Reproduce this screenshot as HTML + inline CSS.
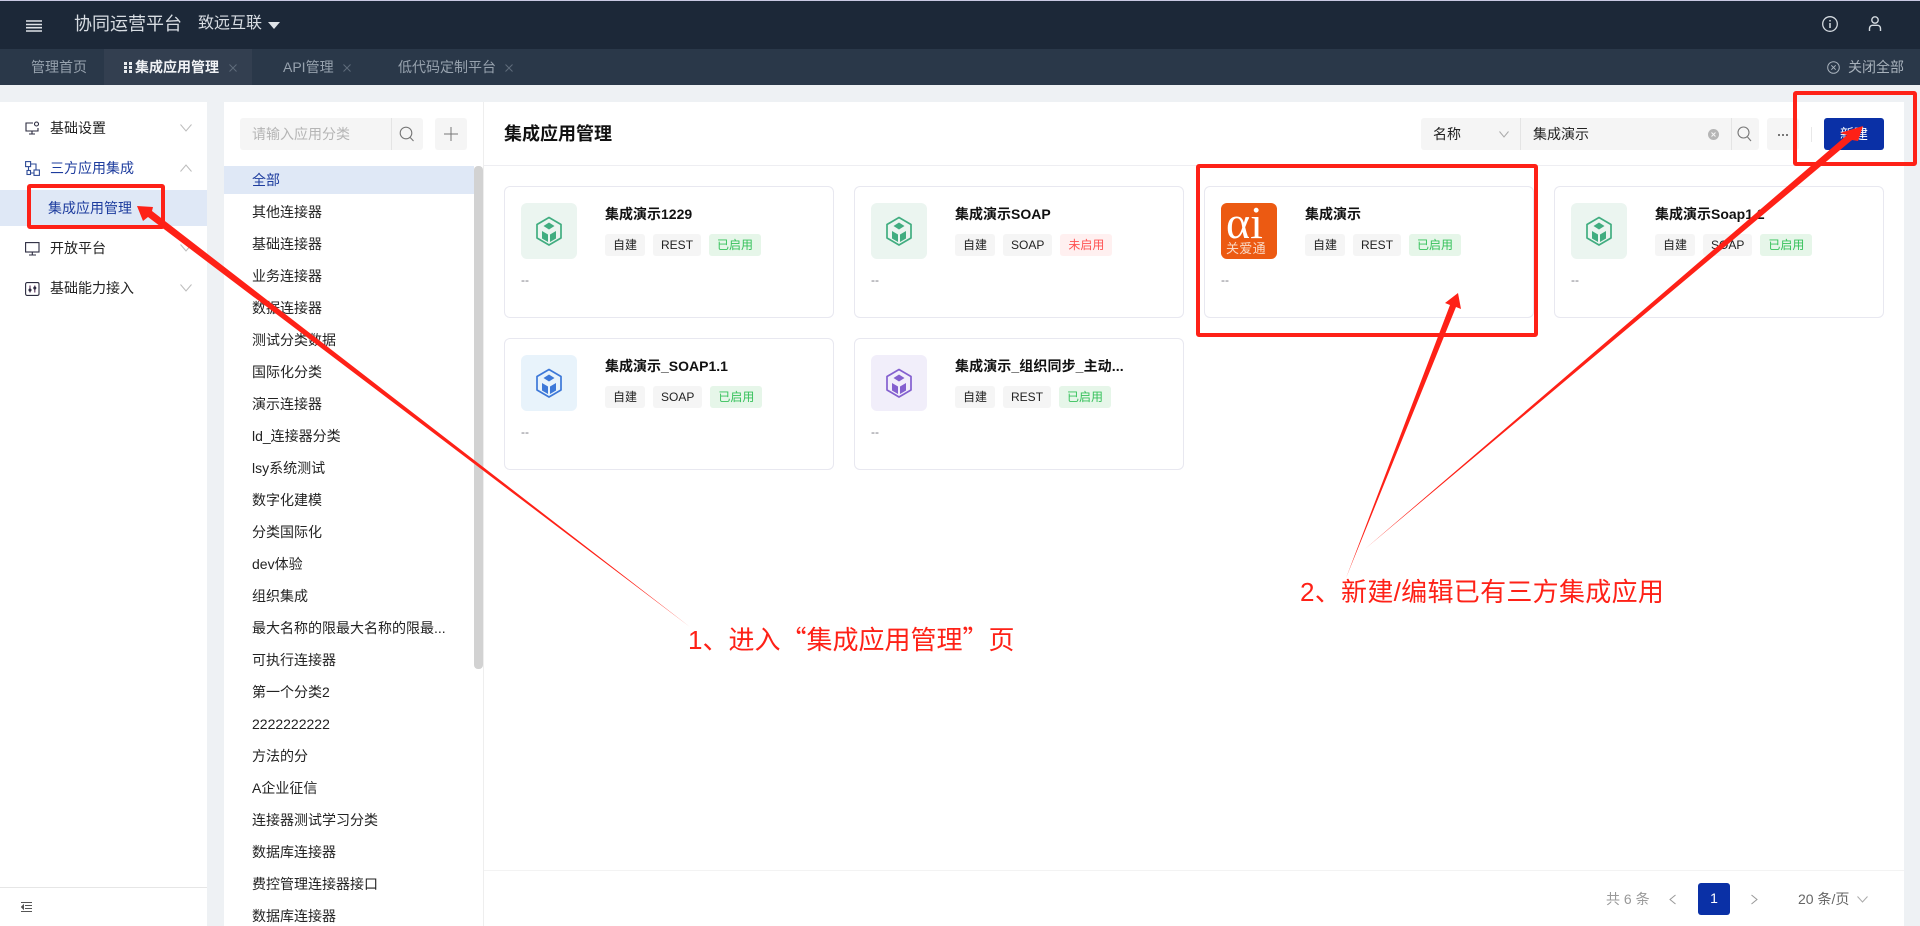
<!DOCTYPE html>
<html lang="zh-CN">
<head>
<meta charset="utf-8">
<title>集成应用管理</title>
<style>
*{box-sizing:border-box}
html,body{margin:0;padding:0;width:1920px;height:926px;overflow:hidden;background:#eef1f4;font-family:"Liberation Sans","Noto Sans CJK SC",sans-serif;color:#222;font-size:14px}
.a{position:absolute}
.t{position:absolute;white-space:nowrap;line-height:20px;height:20px}
.topbar{left:0;top:0;width:1920px;height:49px;background:#1c2838;border-top:1px solid #c9c9e2}
.tabbar{left:0;top:49px;width:1920px;height:36px;background:#2a3849}
.tab{color:#97a2ae}
.white{background:#fff}
.row{left:252px;color:#222}
.card{position:absolute;width:330px;height:132px;background:#fff;border:1px solid #e8e8f0;border-radius:6px}
.ic{position:absolute;left:16px;top:16px;width:56px;height:56px;border-radius:6px}
.ti{position:absolute;left:100px;top:17px;line-height:20px;font-weight:700;white-space:nowrap;color:#111}
.tags{position:absolute;left:100px;top:47px;display:flex;gap:8px}
.tag{height:22px;line-height:22px;padding:0 8px;font-size:12px;border-radius:3px;background:#f5f5f5;color:#222;white-space:nowrap}
.g{background:#e6f6e9;color:#36c15b}
.r{background:#fff0f0;color:#ff5252}
.dash{position:absolute;left:16px;top:84px;line-height:18px;font-size:12px;color:#7d7d86}
.red{position:absolute;border:4px solid #fe2117;border-radius:3px}
.lbl{color:#fe2117;font-size:26px;line-height:36px;height:36px;position:absolute;white-space:nowrap}
</style>
</head>
<body>
<div class="a topbar"></div>
<div class="a tabbar"></div>
<div class="a" style="left:104px;top:49px;width:148px;height:36px;background:#333f50"></div>

<!-- top bar -->
<svg class="a" style="left:26px;top:20px" width="16" height="12" viewBox="0 0 16 12"><path d="M0 1h16M0 4.500h16M0 7.700h16M0 11h16" stroke="#dfe3e8" stroke-width="1.600"/></svg>
<div class="t" style="left:74px;top:14px;font-size:18px;color:#d8dde3">协同运营平台</div>
<div class="t" style="left:198px;top:14px;font-size:16px;color:#d8dde3">致远互联</div>
<svg class="a" style="left:268px;top:22px" width="12" height="7" viewBox="0 0 12 7"><path d="M0 0h12L6 7z" fill="#dfe3e8"/></svg>
<svg class="a" style="left:1821px;top:15px" width="18" height="18" viewBox="0 0 18 18" fill="none" stroke="#d4dae0" stroke-width="1.300"><circle cx="9" cy="9" r="7.300"/><path d="M9 8v5M9 5v1.500" stroke-width="1.500"/></svg>
<svg class="a" style="left:1866px;top:15px" width="18" height="18" viewBox="0 0 18 18" fill="none" stroke="#d4dae0" stroke-width="1.400"><circle cx="9" cy="5" r="3.200"/><path d="M3.500 16v-2.500c0-2 1.500-3.200 3-3.200h5c1.500 0 3 1.200 3 3.200V16"/></svg>

<!-- tabs -->
<div class="t tab" style="left:31px;top:57px">管理首页</div>
<svg class="a" style="left:124px;top:62px" width="8" height="11" viewBox="0 0 8 11" fill="#e8ebef"><rect x="0" y="0" width="3" height="3"/><rect x="5" y="0" width="3" height="3"/><rect x="0" y="4" width="3" height="3"/><rect x="5" y="4" width="3" height="3"/><rect x="0" y="8" width="3" height="3"/><rect x="5" y="8" width="3" height="3"/></svg>
<div class="t" style="left:135px;top:57px;color:#f0f2f5;font-weight:700">集成应用管理</div>
<svg class="a" style="left:229px;top:64px" width="8" height="8" viewBox="0 0 8 8"><path d="M.5.5l7 7M7.500.5l-7 7" stroke="#5f6c7b"/></svg>
<div class="t tab" style="left:283px;top:57px">API管理</div>
<svg class="a" style="left:343px;top:64px" width="8" height="8" viewBox="0 0 8 8"><path d="M.5.5l7 7M7.500.5l-7 7" stroke="#5f6c7b"/></svg>
<div class="t tab" style="left:398px;top:57px">低代码定制平台</div>
<svg class="a" style="left:505px;top:64px" width="8" height="8" viewBox="0 0 8 8"><path d="M.5.5l7 7M7.500.5l-7 7" stroke="#5f6c7b"/></svg>
<svg class="a" style="left:1827px;top:61px" width="13" height="13" viewBox="0 0 13 13" fill="none" stroke="#a8b2bc"><circle cx="6.500" cy="6.500" r="5.800"/><path d="M4.300 4.300l4.400 4.400M8.700 4.300l-4.400 4.400"/></svg>
<div class="t" style="left:1848px;top:57px;color:#a8b2bc">关闭全部</div>

<!-- sidebar -->
<div class="a white" style="left:0;top:102px;width:207px;height:824px"></div>
<div class="a" style="left:0;top:190px;width:207px;height:36px;background:#dfe8f6"></div>
<svg class="a" style="left:25px;top:121px" width="15" height="14" viewBox="0 0 15 14" fill="none" stroke="#2b2b3f" stroke-width="1.100"><path d="M8 2H1v8h12V7M7 10v3M4 13h6"/><circle cx="11.500" cy="3" r="2"/></svg>
<div class="t" style="left:50px;top:118px">基础设置</div>
<svg class="a" style="left:25px;top:161px" width="15" height="15" viewBox="0 0 15 15" fill="none" stroke="#2f4c97" stroke-width="1.100"><rect x=".6" y=".6" width="5" height="5"/><rect x="9" y="9" width="5.400" height="5.400"/><rect x="2" y="9.500" width="3.500" height="4"/><path d="M5.600 3H11v6M3.500 5.600v4M5.500 12H9"/></svg>
<div class="t" style="left:50px;top:158px;color:#1d3c9e">三方应用集成</div>
<div class="t" style="left:48px;top:198px;color:#1d3c9e">集成应用管理</div>
<svg class="a" style="left:25px;top:242px" width="15" height="14" viewBox="0 0 15 14" fill="none" stroke="#2b2b3f" stroke-width="1.100"><rect x=".6" y=".6" width="13.400" height="9.400"/><path d="M7.300 10v3M4 13h7"/></svg>
<div class="t" style="left:50px;top:238px">开放平台</div>
<svg class="a" style="left:25px;top:282px" width="15" height="14" viewBox="0 0 15 14" fill="none" stroke="#2b2b3f" stroke-width="1.100"><rect x=".6" y=".6" width="13.400" height="12.800" rx="1.500"/><path d="M5 3.500v7M9.800 3.500v7" stroke="#552a55"/><circle cx="5" cy="8" r="1" fill="#2b2b3f"/><circle cx="9.800" cy="6" r="1" fill="#2b2b3f"/></svg>
<div class="t" style="left:50px;top:278px">基础能力接入</div>
<svg class="a" style="left:180px;top:124px" width="12" height="8" viewBox="0 0 12 8" fill="none" stroke="#bcbcbc"><path d="M.5.5L6 7 11.500.5"/></svg>
<svg class="a" style="left:180px;top:164px" width="12" height="8" viewBox="0 0 12 8" fill="none" stroke="#bcbcbc"><path d="M.5 7.500L6 1l5.500 6.500"/></svg>
<svg class="a" style="left:180px;top:244px" width="12" height="8" viewBox="0 0 12 8" fill="none" stroke="#bcbcbc"><path d="M.5.5L6 7 11.500.5"/></svg>
<svg class="a" style="left:180px;top:284px" width="12" height="8" viewBox="0 0 12 8" fill="none" stroke="#bcbcbc"><path d="M.5.5L6 7 11.500.5"/></svg>
<div class="a" style="left:0;top:887px;width:207px;height:1px;background:#e6e6e6"></div>
<svg class="a" style="left:21px;top:902px" width="12" height="10" viewBox="0 0 12 10" fill="none" stroke="#555"><path d="M0 .5h11M4 3.500h7M4 6.500h7M0 9.500h11"/><path d="M2.500 3L.5 5l2 2z" fill="#555"/></svg>

<!-- category panel -->
<div class="a white" style="left:224px;top:102px;width:260px;height:824px;border-right:1px solid #eeeeee"></div>
<div class="a" style="left:240px;top:118px;width:183px;height:32px;background:#f5f5f5;border-radius:3px"></div>
<div class="a" style="left:391px;top:118px;width:1px;height:32px;background:#e4e4e4"></div>
<div class="t" style="left:252px;top:124px;color:#b5b5b5">请输入应用分类</div>
<svg class="a" style="left:399px;top:126px" width="16" height="16" viewBox="0 0 16 16" fill="none" stroke="#777" stroke-width="1.100"><circle cx="7" cy="7" r="5.800"/><path d="M11 11.300l3.500 3.700"/></svg>
<div class="a" style="left:435px;top:118px;width:32px;height:32px;background:#f5f5f5;border-radius:3px"></div>
<svg class="a" style="left:444px;top:127px" width="14" height="14" viewBox="0 0 14 14" stroke="#777"><path d="M7 0v14M0 7h14"/></svg>
<div class="a" style="left:224px;top:166px;width:250px;height:28px;background:#dfe8f6"></div>
<div class="a" style="left:474px;top:166px;width:9px;height:503px;background:#d2d2d2;border-radius:4px"></div>
<div class="t row" style="top:170px;color:#1d3c9e">全部</div>
<div class="t row" style="top:202px">其他连接器</div>
<div class="t row" style="top:234px">基础连接器</div>
<div class="t row" style="top:266px">业务连接器</div>
<div class="t row" style="top:298px">数据连接器</div>
<div class="t row" style="top:330px">测试分类数据</div>
<div class="t row" style="top:362px">国际化分类</div>
<div class="t row" style="top:394px">演示连接器</div>
<div class="t row" style="top:426px">ld_连接器分类</div>
<div class="t row" style="top:458px">lsy系统测试</div>
<div class="t row" style="top:490px">数字化建模</div>
<div class="t row" style="top:522px">分类国际化</div>
<div class="t row" style="top:554px">dev体验</div>
<div class="t row" style="top:586px">组织集成</div>
<div class="t row" style="top:618px">最大名称的限最大名称的限最...</div>
<div class="t row" style="top:650px">可执行连接器</div>
<div class="t row" style="top:682px">第一个分类2</div>
<div class="t row" style="top:714px">2222222222</div>
<div class="t row" style="top:746px">方法的分</div>
<div class="t row" style="top:778px">A企业征信</div>
<div class="t row" style="top:810px">连接器测试学习分类</div>
<div class="t row" style="top:842px">数据库连接器</div>
<div class="t row" style="top:874px">费控管理连接器接口</div>
<div class="t row" style="top:906px">数据库连接器</div>

<!-- main -->
<div class="a white" style="left:484px;top:102px;width:1420px;height:824px"></div>
<div class="a" style="left:484px;top:165px;width:1420px;height:1px;background:#eeeef2"></div>
<div class="a" style="left:484px;top:870px;width:1420px;height:1px;background:#f3f3f3"></div>
<div class="t" style="left:504px;top:122px;font-size:18px;line-height:24px;height:24px;font-weight:700;color:#111">集成应用管理</div>

<div class="a" style="left:1421px;top:118px;width:338px;height:32px;background:#f5f5f5;border-radius:3px"></div>
<div class="a" style="left:1520px;top:118px;width:1px;height:32px;background:#e4e4e4"></div>
<div class="a" style="left:1731px;top:118px;width:1px;height:32px;background:#e4e4e4"></div>
<div class="t" style="left:1433px;top:124px">名称</div>
<svg class="a" style="left:1499px;top:131px" width="10" height="7" viewBox="0 0 10 7" fill="none" stroke="#aaa"><path d="M.5.5L5 6 9.500.5"/></svg>
<div class="t" style="left:1533px;top:124px">集成演示</div>
<svg class="a" style="left:1708px;top:129px" width="11" height="11" viewBox="0 0 11 11"><circle cx="5.500" cy="5.500" r="5.500" fill="#b5b5b5"/><path d="M3.500 3.500l4 4M7.500 3.500l-4 4" stroke="#f5f5f5"/></svg>
<svg class="a" style="left:1737px;top:126px" width="15" height="16" viewBox="0 0 15 16" fill="none" stroke="#777" stroke-width="1.100"><circle cx="6.500" cy="6.500" r="5.500"/><path d="M10.500 11l3.500 4"/></svg>
<div class="a" style="left:1767px;top:118px;width:32px;height:32px;background:#f5f5f5;border-radius:3px"></div>
<div class="a" style="left:1778px;top:134px;width:10px;height:2px;background-image:repeating-linear-gradient(90deg,#777 0 2px,transparent 2px 4px)"></div>
<div class="a" style="left:1811px;top:127px;width:1px;height:15px;background:#e8e8e8"></div>
<div class="a" style="left:1824px;top:118px;width:60px;height:32px;background:#0a30a6;border-radius:3px"></div>
<div class="t" style="left:1840px;top:124px;color:#fff">新建</div>

<!-- cards -->
<div class="card" style="left:504px;top:186px">
  <div class="ic" style="background:#ebf5f0"><svg width="56" height="56" viewBox="0 0 56 56"><path d="M28 14.500l12 7v13.500l-12 7-12-7V21.500z" fill="none" stroke="#41ad80" stroke-width="1.700" stroke-linejoin="round"/><path d="M28 19.500l5.500 3.500-5.500 3.500-5.500-3.500zM21 28l6 3.500V39l-6-3.500zM35 28l-6 3.500V39l6-3.500z" fill="#41ad80"/></svg></div>
  <div class="ti">集成演示1229</div>
  <div class="tags"><span class="tag">自建</span><span class="tag">REST</span><span class="tag g">已启用</span></div>
  <div class="dash">--</div>
</div>
<div class="card" style="left:854px;top:186px">
  <div class="ic" style="background:#ebf5f0"><svg width="56" height="56" viewBox="0 0 56 56"><path d="M28 14.500l12 7v13.500l-12 7-12-7V21.500z" fill="none" stroke="#41ad80" stroke-width="1.700" stroke-linejoin="round"/><path d="M28 19.500l5.500 3.500-5.500 3.500-5.500-3.500zM21 28l6 3.500V39l-6-3.500zM35 28l-6 3.500V39l6-3.500z" fill="#41ad80"/></svg></div>
  <div class="ti">集成演示SOAP</div>
  <div class="tags"><span class="tag">自建</span><span class="tag">SOAP</span><span class="tag r">未启用</span></div>
  <div class="dash">--</div>
</div>
<div class="card" style="left:1204px;top:186px">
  <div class="ic" style="background:#ec5a12;overflow:hidden">
    <div class="a" style="left:5px;top:-6px;font-family:'Liberation Serif',serif;font-size:46px;line-height:52px;color:#fff">αi</div>
    <div class="a" style="left:5px;top:37px;font-size:13px;line-height:18px;color:#f9d8c4;white-space:nowrap;letter-spacing:.3px">关爱通</div>
  </div>
  <div class="ti">集成演示</div>
  <div class="tags"><span class="tag">自建</span><span class="tag">REST</span><span class="tag g">已启用</span></div>
  <div class="dash">--</div>
</div>
<div class="card" style="left:1554px;top:186px">
  <div class="ic" style="background:#ebf5f0"><svg width="56" height="56" viewBox="0 0 56 56"><path d="M28 14.500l12 7v13.500l-12 7-12-7V21.500z" fill="none" stroke="#41ad80" stroke-width="1.700" stroke-linejoin="round"/><path d="M28 19.500l5.500 3.500-5.500 3.500-5.500-3.500zM21 28l6 3.500V39l-6-3.500zM35 28l-6 3.500V39l6-3.500z" fill="#41ad80"/></svg></div>
  <div class="ti">集成演示Soap1.2</div>
  <div class="tags"><span class="tag">自建</span><span class="tag">SOAP</span><span class="tag g">已启用</span></div>
  <div class="dash">--</div>
</div>
<div class="card" style="left:504px;top:338px">
  <div class="ic" style="background:#e8f3fb"><svg width="56" height="56" viewBox="0 0 56 56"><path d="M28 14.500l12 7v13.500l-12 7-12-7V21.500z" fill="none" stroke="#3d78d8" stroke-width="1.700" stroke-linejoin="round"/><path d="M28 19.500l5.500 3.500-5.500 3.500-5.500-3.500zM21 28l6 3.500V39l-6-3.500zM35 28l-6 3.500V39l6-3.500z" fill="#3d78d8"/></svg></div>
  <div class="ti">集成演示_SOAP1.1</div>
  <div class="tags"><span class="tag">自建</span><span class="tag">SOAP</span><span class="tag g">已启用</span></div>
  <div class="dash">--</div>
</div>
<div class="card" style="left:854px;top:338px">
  <div class="ic" style="background:#f1eefa"><svg width="56" height="56" viewBox="0 0 56 56"><path d="M28 14.500l12 7v13.500l-12 7-12-7V21.500z" fill="none" stroke="#8460cf" stroke-width="1.700" stroke-linejoin="round"/><path d="M28 19.500l5.500 3.500-5.500 3.500-5.500-3.500zM21 28l6 3.500V39l-6-3.500zM35 28l-6 3.500V39l6-3.500z" fill="#8460cf"/></svg></div>
  <div class="ti" style="letter-spacing:.1px">集成演示_组织同步_主动...</div>
  <div class="tags"><span class="tag">自建</span><span class="tag">REST</span><span class="tag g">已启用</span></div>
  <div class="dash">--</div>
</div>

<!-- pagination -->
<div class="t" style="left:1606px;top:889px;color:#999">共 6 条</div>
<svg class="a" style="left:1669px;top:894px" width="8" height="11" viewBox="0 0 8 11" fill="none" stroke="#999"><path d="M6.500 1L1 5.500l5.500 4.500"/></svg>
<div class="a" style="left:1698px;top:883px;width:32px;height:32px;background:#0a30a6;border-radius:3px;color:#fff;text-align:center;line-height:30px">1</div>
<svg class="a" style="left:1750px;top:894px" width="8" height="11" viewBox="0 0 8 11" fill="none" stroke="#999"><path d="M1.500 1L7 5.500 1.500 10"/></svg>
<div class="t" style="left:1798px;top:889px;color:#666">20 条/页</div>
<svg class="a" style="left:1857px;top:896px" width="11" height="7" viewBox="0 0 11 7" fill="none" stroke="#aaa"><path d="M.5.5L5.500 6 10.500.5"/></svg>

<!-- annotations -->
<div class="red" style="left:27px;top:184px;width:138px;height:45px"></div>
<div class="red" style="left:1196px;top:164px;width:342px;height:173px"></div>
<div class="red" style="left:1793px;top:91px;width:124px;height:75px"></div>
<svg class="a" style="left:0;top:0" width="1920" height="926" viewBox="0 0 1920 926">
  <polygon fill="#fe2117" points="137,206 153,207 152,211 690,627 148,217 143,221"/>
  <polygon fill="#fe2117" points="1458,293 1445,303 1450,305 1346,578 1456,307 1461,309"/>
  <polygon fill="#fe2117" points="1863,126 1840,133 1847,135 1365,549 1852,140 1858,141"/>
</svg>
<div class="lbl" style="left:688px;top:621px">1、进入<span style="font-family:'Noto Sans CJK SC',sans-serif">“</span>集成应用管理<span style="font-family:'Noto Sans CJK SC',sans-serif">”</span>页</div>
<div class="lbl" style="left:1300px;top:574px;letter-spacing:.3px">2、新建/编辑已有三方集成应用</div>
</body>
</html>
